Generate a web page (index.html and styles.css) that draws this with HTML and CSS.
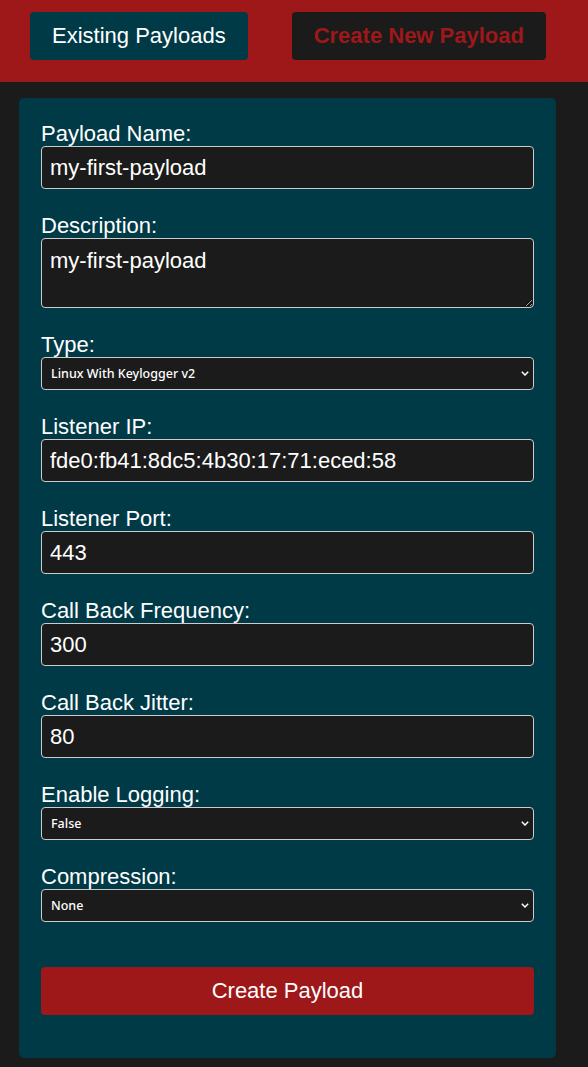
FILE: index.html
```
<!DOCTYPE html>
<html lang="en">
<head>
<meta charset="utf-8">
<title>Payloads</title>
<link rel="stylesheet" href="styles.css">
</head>
<body>
<header class="topbar">
  <button class="tab tab-existing" type="button">Existing Payloads</button>
  <button class="tab tab-active" type="button">Create New Payload</button>
</header>
<main class="card">
  <form class="form">
    <div class="field">
      <label class="label" for="name">Payload Name:</label>
      <input class="input" id="name" type="text" value="my-first-payload">
    </div>
    <div class="field">
      <label class="label" for="desc">Description:</label>
      <textarea class="input textarea" id="desc">my-first-payload</textarea>
    </div>
    <div class="field">
      <label class="label" for="type">Type:</label>
      <div class="select-wrap">
        <select class="select" id="type"><option>Linux With Keylogger v2</option></select>
        <svg class="chevron" width="8" height="5" viewBox="0 0 8 5"><path d="M0.8 0.8 L4 4 L7.2 0.8" fill="none" stroke="#ffffff" stroke-width="1.5"/></svg>
      </div>
    </div>
    <div class="field">
      <label class="label" for="ip">Listener IP:</label>
      <input class="input" id="ip" type="text" value="fde0:fb41:8dc5:4b30:17:71:eced:58">
    </div>
    <div class="field">
      <label class="label" for="port">Listener Port:</label>
      <input class="input" id="port" type="text" value="443">
    </div>
    <div class="field">
      <label class="label" for="freq">Call Back Frequency:</label>
      <input class="input" id="freq" type="text" value="300">
    </div>
    <div class="field">
      <label class="label" for="jitter">Call Back Jitter:</label>
      <input class="input" id="jitter" type="text" value="80">
    </div>
    <div class="field">
      <label class="label" for="log">Enable Logging:</label>
      <div class="select-wrap">
        <select class="select" id="log"><option>False</option></select>
        <svg class="chevron" width="8" height="5" viewBox="0 0 8 5"><path d="M0.8 0.8 L4 4 L7.2 0.8" fill="none" stroke="#ffffff" stroke-width="1.5"/></svg>
      </div>
    </div>
    <div class="field field-last">
      <label class="label" for="comp">Compression:</label>
      <div class="select-wrap">
        <select class="select" id="comp"><option>None</option></select>
        <svg class="chevron" width="8" height="5" viewBox="0 0 8 5"><path d="M0.8 0.8 L4 4 L7.2 0.8" fill="none" stroke="#ffffff" stroke-width="1.5"/></svg>
      </div>
    </div>
    <button class="submit" type="button">Create Payload</button>
  </form>
</main>
</body>
</html>
```
FILE: styles.css
```
* { box-sizing: border-box; }
html, body { margin: 0; padding: 0; }
body {
  background: #1b1b1b;
  font-family: "Liberation Sans", Arial, sans-serif;
  color: #ffffff;
  width: 588px;
  height: 1067px;
  overflow: hidden;
}
.topbar {
  background: #9e1719;
  display: flex;
  gap: 44px;
  padding: 12px 30px 22px;
}
.tab {
  height: 48px;
  padding: 0 22px;
  border: none;
  border-radius: 4px;
  font-family: "Liberation Sans", Arial, sans-serif;
  font-size: 22px;
  cursor: pointer;
}
.tab-existing {
  background: #003a47;
  color: #ffffff;
}
.tab-active {
  background: #1b1b1b;
  color: #9e1719;
  font-weight: bold;
}
.card {
  width: 537px;
  margin: 16px 0 0 19px;
  padding: 23px 22px 43px;
  background: #003a47;
  border-radius: 5px;
}
.form { display: flex; flex-direction: column; }
.field { display: flex; flex-direction: column; margin-bottom: 24px; }
.field-last { margin-bottom: 45px; }
.label {
  font-size: 22px;
  line-height: 25px;
  color: #ffffff;
}
.input {
  width: 100%;
  height: 43px;
  padding: 0 8px;
  border: 1px solid #cccccc;
  border-radius: 4px;
  background: #1b1b1b;
  color: #ffffff;
  font-family: "Liberation Sans", Arial, sans-serif;
  font-size: 22px;
  line-height: 25px;
  outline: none;
}
.textarea {
  height: 70px;
  padding: 9px 8px;
  resize: both;
}
.select-wrap { position: relative; }
.select {
  display: block;
  width: 100%;
  height: 33px;
  padding: 0 20px 0 9px;
  border: 1px solid #cccccc;
  border-radius: 4px;
  background: #1b1b1b;
  color: #ffffff;
  font-family: "Noto Sans", "Open Sans", sans-serif;
  font-size: 12.5px;
  font-weight: 500;
  outline: none;
  -webkit-appearance: none;
  appearance: none;
}
.chevron {
  position: absolute;
  right: 5px;
  top: 14px;
  pointer-events: none;
}
.submit {
  height: 48px;
  width: 100%;
  border: none;
  border-radius: 4px;
  background: #9e1719;
  color: #ffffff;
  font-family: "Liberation Sans", Arial, sans-serif;
  font-size: 22px;
  cursor: pointer;
}
```
